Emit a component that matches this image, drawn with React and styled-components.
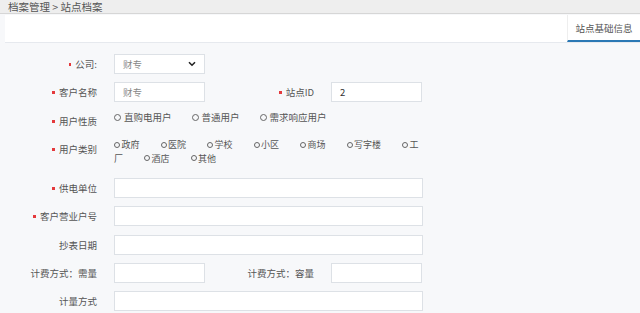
import React from 'react';
import styled, { createGlobalStyle } from 'styled-components';

const GlobalStyle = createGlobalStyle`
  html, body {
    margin: 0;
    padding: 0;
    background: #f7f8fa;
    font-family: "Noto Sans CJK SC", "Noto Sans", "Liberation Sans", sans-serif;
    color: #555;
  }
`;

const Header = styled.div`
  height: 13px;
  line-height: 13px;
  background: #eeeeee;
  border-bottom: 1px solid #d6d6d6;
  padding-left: 8px;
  font-size: 10.5px;
  color: #555;
`;

const TabBar = styled.div`
  margin: 1px 0 0 5px;
  height: 27px;
  background: #fff;
  border-bottom: 1px solid #e6e9ee;
  display: flex;
  justify-content: flex-end;
`;

const Tab = styled.div`
  width: 73px;
  box-sizing: border-box;
  border-left: 1px solid #eeeeee;
  border-bottom: 2px solid #2b78b4;
  font-size: 9.5px;
  color: #555;
  display: flex;
  align-items: center;
  justify-content: center;
  padding-top: 1px;
`;

const Form = styled.div`
  padding-top: 11px;
`;

const Row = styled.div`
  display: flex;
  align-items: ${(p) => (p.$top ? 'flex-start' : 'center')};
  margin-top: ${(p) => p.$gap || 0}px;
`;

const Label = styled.div`
  width: ${(p) => p.$width || 97}px;
  flex: none;
  text-align: right;
  font-size: 9.5px;
  line-height: 14px;
  color: #555;
  padding-top: ${(p) => p.$offset || 0}px;
  white-space: nowrap;
`;

const Required = styled.span`
  display: inline-block;
  width: 2.5px;
  height: 2.5px;
  background: #e4393c;
  margin-right: 4px;
  vertical-align: middle;
  position: relative;
  top: -1px;
`;

const Field = styled.div`
  margin-left: 17px;
  width: ${(p) => (p.$wide ? 309 : 91)}px;
  height: 20px;
  box-sizing: border-box;
  background: #fff;
  border: 1px solid #dde1e6;
  display: flex;
  align-items: center;
  justify-content: space-between;
  padding: 0 8px;
  font-size: 9.5px;
  color: ${(p) => (p.$dark ? '#333' : '#888')};
`;

const RadioGroup = styled.div`
  margin-left: 17px;
  width: ${(p) => p.$width || 309}px;
  font-size: ${(p) => (p.$small ? 9 : 9.5)}px;
  line-height: ${(p) => (p.$small ? 13.5 : 14)}px;
  color: #555;
`;

const Option = styled.span`
  margin-right: ${(p) => (p.$small ? 21 : 20)}px;
`;

const Circle = styled.span`
  display: inline-block;
  box-sizing: border-box;
  width: ${(p) => (p.$small ? 6 : 7)}px;
  height: ${(p) => (p.$small ? 6 : 7)}px;
  border: 1px solid #666;
  border-radius: 50%;
  margin-right: ${(p) => (p.$small ? 1.5 : 3)}px;
  vertical-align: middle;
  position: relative;
  top: -1px;
`;

const Chevron = () => (
  <svg width="8" height="6" viewBox="0 0 8 6">
    <path d="M1 1.2 L4 4.2 L7 1.2" fill="none" stroke="#222" strokeWidth="1.6" />
  </svg>
);

const natures = ['直购电用户', '普通用户', '需求响应用户'];
const categories = ['政府', '医院', '学校', '小区', '商场', '写字楼', '工厂', '酒店', '其他'];

export default function App() {
  return (
    <>
      <GlobalStyle />
      <Header>档案管理 &gt; 站点档案</Header>
      <TabBar>
        <Tab>站点基础信息</Tab>
      </TabBar>
      <Form>
        <Row>
          <Label><Required />公司:</Label>
          <Field>
            <span>财专</span>
            <Chevron />
          </Field>
        </Row>
        <Row $gap={8}>
          <Label><Required />客户名称</Label>
          <Field>财专</Field>
          <Label $width={109}><Required />站点ID</Label>
          <Field $dark>2</Field>
        </Row>
        <Row $top $gap={8}>
          <Label $offset={4}><Required />用户性质</Label>
          <RadioGroup>
            {natures.map((n) => (
              <Option key={n}><Circle />{n}</Option>
            ))}
          </RadioGroup>
        </Row>
        <Row $top $gap={10}>
          <Label $offset={4}><Required />用户类别</Label>
          <RadioGroup $small $width={310}>
            {categories.map((c) => (
              <Option key={c} $small><Circle $small />{c}</Option>
            ))}
          </RadioGroup>
        </Row>
        <Row $gap={13}>
          <Label><Required />供电单位</Label>
          <Field $wide />
        </Row>
        <Row $gap={8.3}>
          <Label><Required />客户营业户号</Label>
          <Field $wide />
        </Row>
        <Row $gap={8.3}>
          <Label>抄表日期</Label>
          <Field $wide />
        </Row>
        <Row $gap={8.3}>
          <Label>计费方式：需量</Label>
          <Field />
          <Label $width={109}>计费方式：容量</Label>
          <Field />
        </Row>
        <Row $gap={8.3}>
          <Label>计量方式</Label>
          <Field $wide />
        </Row>
      </Form>
    </>
  );
}
